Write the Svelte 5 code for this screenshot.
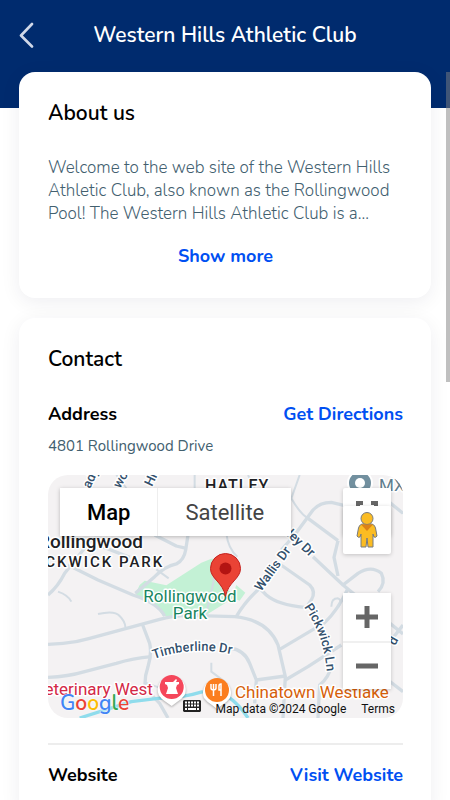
<script lang="ts">
    let expanded = $state(false);
    let mapType = $state('Map');

    const mapTypes = ['Map', 'Satellite'];

    const roads = [
        'M0 523 L45 520 Q85 517 125 505 L335 448 Q370 438 420 436 L560 440 Q660 450 690 525 L712 620 L705 744',
        'M0 622 Q60 620 110 605 L205 580 Q255 565 310 560',
        'M545 534 Q590 540 605 580 L625 630 L620 700',
        'M625 630 L712 618',
        'M284 465 L305 520 Q312 550 300 590 Q288 625 292 655 L335 700 L360 744',
        'M0 375 Q30 350 50 310 L125 215 L160 190',
        'M60 285 L150 330 L255 375 Q330 400 350 438',
        'M150 225 L245 262',
        'M320 195 L385 228 L415 235',
        'M420 195 L413 240 Q408 270 385 282 Q350 290 320 320 L262 370',
        'M565 440 Q590 395 640 350 M700 240 L740 195 L795 120 Q815 97 850 97 L925 115',
        'M780 145 L870 212',
        'M870 212 L858 262 L870 318',
        'M795 260 L885 345 L1065 492',
        'M885 345 L930 310 Q970 285 1000 310 Q1015 340 990 365',
        'M630 350 L655 375 Q690 405 770 412',
        'M695 282 L785 345 Q805 365 790 390 L780 405',
        'M695 538 L830 458 Q870 420 900 355',
        'M712 630 L780 590 L880 525',
        'M848 590 Q845 620 815 645 L810 744',
        'M1010 85 L1065 130',
        'M1020 630 L1065 665',
        'M1030 510 L1065 465',
    ];

    const lanes = [
        'M150 432 Q200 420 215 438 Q232 455 232 472',
        'M325 298 L362 325',
        'M535 190 Q540 235 568 260',
        'M500 320 L475 430',
        'M205 15 L235 54 M440 15 V54 M600 15 L620 54',
        'M755 15 L730 85 Q755 130 780 145',
        'M490 578 V605 L530 635',
        'M292 638 L340 655',
        'M30 365 Q60 375 70 395',
        'M850 410 Q850 385 870 385 Q885 392 870 412',
    ];
</script>

<div class="page">
    <header>
        <button class="back" aria-label="Back">
            <svg width="15" height="26" viewBox="0 0 15 26" aria-hidden="true">
                <path d="M13 2 2 13.500l11 11" />
            </svg>
        </button>
        <h1>Western Hills Athletic Club</h1>
    </header>

    <main>
        <section class="card">
            <h2>About us</h2>
            <p class="about" class:expanded>
                Welcome to the web site of the Western Hills Athletic Club, also known as the
                Rollingwood Pool! The Western Hills Athletic Club is a...
            </p>
            <button class="action more" onclick={() => (expanded = !expanded)}>Show more</button>
        </section>

        <section class="card">
            <h2>Contact</h2>
            <div class="row">
                <h3>Address</h3>
                <a class="action" href="#directions">Get Directions</a>
            </div>
            <p class="address">4801 Rollingwood Drive</p>

            <div class="map">
                <svg class="canvas" viewBox="0 0 355 243" preserveAspectRatio="xMidYMid slice">
                    <g transform="translate(0 -5) scale(.33333)">
                        <path
                            class="park"
                            d="M275 345 L290 332 L355 346 L460 278 L490 266 H540 L530 350 L555 372 L565 345 L592 368 L575 392 L555 385 L490 425 L470 438 H345 L325 408 L262 372Z"
                        />
                        {#each lanes as d}
                            <path class="lane" {d} />
                        {/each}
                        {#each roads as d}
                            <path class="road" {d} />
                        {/each}
                        <path
                            class="river"
                            d="M95 744 L250 695 L330 685 Q400 685 465 665 M540 680 Q575 705 600 744"
                        />
                    </g>

                    <g class="street">
                        <text transform="translate(42 14) rotate(-65)">ady</text>
                        <text transform="translate(72 14) rotate(-60)">wood</text>
                        <text transform="translate(104 12) rotate(-65)">Hills</text>
                        <text transform="translate(213 117) rotate(-54)">Wallis Dr</text>
                        <text transform="translate(238 60) rotate(43)">ley Dr</text>
                        <text transform="translate(347 171) rotate(-60)">d</text>
                        <path id="timberline" d="M106 184 Q145 170 188 180" />
                        <text><textPath href="#timberline">Timberline Dr</textPath></text>
                        <path id="pickwick" d="M256 132 Q276 160 279 198" />
                        <text><textPath href="#pickwick">Pickwick Ln</textPath></text>
                    </g>

                    <text class="area" x="157" y="16">HATLEY</text>
                    <text class="town" x="-10" y="73">Rollingwood</text>
                    <text class="area wide" x="-9" y="92">ICKWICK PARK</text>
                    <text class="green" x="142" y="127" text-anchor="middle">Rollingwood</text>
                    <text class="green" x="142" y="144" text-anchor="middle">Park</text>
                    <text class="vet" x="-14" y="220">Veterinary West</text>
                    <text class="food" x="187" y="223">Chinatown Westlake</text>
                    <text class="shop" x="331" y="16">MX</text>

                    <circle cx="312" cy="8" r="12" fill="#72909f" stroke="#fff" stroke-width="2" />
                    <circle cx="312" cy="8" r="5" fill="#fff" />

                    <path
                        class="pin"
                        d="M110.700 220A14 14 0 1 1 136.700 220Q134 224 129 227L123.700 231L118 227Q113 224 110.700 220Z"
                    />
                    <circle cx="123.700" cy="212" r="12" fill="#f5475b" />
                    <path
                        fill="#fff"
                        d="M117 207h8l3-3 1 1-1 2h3v2l-2 1-1 3 2 6h-12l2-6-1-3-2-1v-2Z"
                    />
                    <path
                        class="pin"
                        d="M156 223A14 14 0 1 1 182 223Q179 227 174 230L169 234L164 230Q159 227 156 223Z"
                    />
                    <circle cx="169" cy="215" r="12" fill="#fb7e1f" />
                    <path
                        fill="none"
                        stroke="#fff"
                        stroke-width="1.500"
                        d="M163 209v4q0 2 2.500 2t2.500-2v-4M165.500 209v12M173 209v12M171 215v-4q0-2 2-2v6Z"
                    />

                    <path
                        fill="#ea4335"
                        stroke="#c5221f"
                        d="M177.500 121.500C175 107 162.500 104 162.500 93.500a15 15 0 0 1 30 0C192.500 104 180 107 177.500 121.500Z"
                    />
                    <circle cx="177.500" cy="93.500" r="6" fill="#b31412" />
                </svg>

                <div class="types">
                    {#each mapTypes as type}
                        <button class:active={mapType === type} onclick={() => (mapType = type)}>
                            {type}
                        </button>
                    {/each}
                </div>

                <div class="corner">
                    <button class="fullscreen" aria-label="Toggle fullscreen view">
                        <svg width="22" height="22" viewBox="0 0 22 22" aria-hidden="true">
                            <path d="M2 7V2h5M15 2h5v5M20 15v5h-5M7 20H2v-5" />
                        </svg>
                    </button>
                    <button class="pegman" aria-label="Street View">
                        <svg width="22" height="38" viewBox="0 0 22 38" aria-hidden="true">
                            <g fill="#fbbc23" stroke="#777a7f">
                                <path
                                    d="M6 13Q3 14 2.500 17L1 25q1 2 3 1l1-3v13h5l1-9 1 9h5V23l1 3q2 1 3-1l-1.500-8Q19 14 16 13Z"
                                />
                                <circle cx="11" cy="7.500" r="6" />
                            </g>
                            <path fill="#dc8217" d="M5 13.500h12L11 20Z" />
                        </svg>
                    </button>
                </div>

                <div class="zoom">
                    <button aria-label="Zoom in">
                        <svg width="22" height="22" viewBox="0 0 22 22" aria-hidden="true">
                            <path d="M0 11h22M11 0v22" />
                        </svg>
                    </button>
                    <button aria-label="Zoom out">
                        <svg width="22" height="22" viewBox="0 0 22 22" aria-hidden="true">
                            <path d="M0 11h22" />
                        </svg>
                    </button>
                </div>

                <a class="google" href="#google" aria-label="Google"
                    ><span class="blue">G</span><span class="red">o</span><span class="yellow">o</span
                    ><span class="blue">g</span><span class="lime">l</span><span class="red">e</span></a
                >

                <div class="credits">
                    <button class="keys" aria-label="Keyboard shortcuts">
                        <svg width="18" height="12" viewBox="0 0 18 12" aria-hidden="true">
                            <path fill="#222" d="M1 0h16l1 1v10l-1 1H1l-1-1V1Z" />
                            <path
                                stroke="#fff"
                                stroke-width="2"
                                stroke-dasharray="2 1"
                                d="M2 2.500h14M2 5.500h14"
                            />
                            <path stroke="#fff" stroke-width="2" d="M2 9h2M5 9h8M14 9h2" />
                        </svg>
                    </button>
                    <span>Map data ©2024 Google</span>
                    <a href="#terms">Terms</a>
                </div>
            </div>

            <div class="row website">
                <h3>Website</h3>
                <a class="action" href="#website">Visit Website</a>
            </div>
        </section>
    </main>
    <div class="scrollbar"></div>
</div>

<style>
    :global(body) {
        background: #fff;
        font-family: Nunito, Lato, 'Open Sans', sans-serif;
    }

    button {
        background: transparent;
        border: 0;
        cursor: pointer;
        font-family: inherit;
        padding: 0;
    }

    a {
        text-decoration: none;
    }

    h1,
    h2,
    h3,
    p {
        margin: 0;
    }

    .page {
        height: 100vh;
        overflow: hidden;
        position: relative;
    }

    header {
        align-items: center;
        background: #002b6e;
        box-sizing: border-box;
        display: grid;
        grid-template-columns: 32px 1fr 32px;
        height: 108px;
        padding: 0 19px 38px;
    }

    .back {
        display: flex;
    }

    .back path {
        fill: none;
        stroke: #d0d8e8;
        stroke-linecap: round;
        stroke-linejoin: round;
        stroke-width: 2.6;
    }

    h1 {
        color: #fff;
        font-size: 21px;
        font-weight: 650;
        line-height: 28px;
        text-align: center;
    }

    main {
        display: flex;
        flex-direction: column;
        gap: 20px;
        margin-top: -36px;
        padding: 0 19px 20px;
    }

    .card {
        background: #fff;
        border-radius: 16px;
        box-shadow: 0 4px 20px rgba(20, 20, 60, 0.07);
        display: flex;
        flex-direction: column;
        padding: 27px 28px 30px 29px;
    }

    h2 {
        color: #000;
        font-size: 21px;
        font-weight: 650;
        line-height: 28px;
        margin-bottom: 29px;
    }

    h3 {
        color: #000;
        font-size: 18px;
        font-weight: 700;
        line-height: 24px;
    }

    .about {
        color: #42606f;
        display: -webkit-box;
        font-size: 17px;
        font-weight: 300;
        line-height: 23px;
        overflow: hidden;
        -webkit-box-orient: vertical;
        -webkit-line-clamp: 3;
        line-clamp: 3;
    }

    .about.expanded {
        -webkit-line-clamp: none;
        line-clamp: none;
    }

    .action {
        color: #004ff2;
        font-size: 18px;
        font-weight: 700;
        line-height: 24px;
    }

    .more {
        align-self: center;
        margin-top: 19px;
    }

    .row {
        align-items: center;
        display: flex;
        justify-content: space-between;
    }

    .address {
        color: #42606f;
        font-size: 15px;
        line-height: 20px;
        margin: 10px 0 19px;
    }

    .map {
        background: #f4f2f3;
        border-radius: 20px;
        font-family: Roboto, Arial, sans-serif;
        height: 243px;
        overflow: hidden;
        position: relative;
    }

    .canvas {
        display: block;
        height: 100%;
        width: 100%;
    }

    .park {
        fill: #c3f1d5;
    }

    .road,
    .lane,
    .river {
        fill: none;
        stroke: #d3dce3;
        stroke-linejoin: round;
        stroke-width: 10;
    }

    .lane {
        stroke-width: 6;
    }

    .river {
        stroke: #8fdcec;
    }

    .canvas text {
        paint-order: stroke;
        stroke: #fff;
        stroke-linejoin: round;
        stroke-width: 3px;
    }

    .street {
        fill: #33506c;
        font-size: 13px;
        font-weight: 500;
    }

    .street path {
        fill: none;
    }

    .area {
        fill: #202124;
        font-size: 16px;
        font-weight: 500;
        letter-spacing: 1px;
    }

    .area.wide {
        font-size: 15px;
        letter-spacing: 2px;
    }

    .town {
        fill: #202124;
        font-size: 19px;
        font-weight: 500;
    }

    .green,
    .vet,
    .food,
    .shop {
        font-size: 17px;
    }

    .green {
        fill: #188560;
    }

    .vet {
        fill: #d32846;
    }

    .food {
        fill: #d65f0b;
    }

    .shop {
        fill: #5e7d8e;
    }

    .pin {
        fill: #fff;
        filter: drop-shadow(0 1px 1px rgba(0, 0, 0, 0.3));
    }

    .types {
        box-shadow: 0 1px 4px rgba(0, 0, 0, 0.25);
        display: flex;
        left: 12px;
        position: absolute;
        top: 13px;
    }

    .types button {
        background: #fff;
        color: #444;
        font-size: 22px;
        height: 48px;
        padding: 0 27px;
    }

    .types button + button {
        border-left: 1px solid #eee;
    }

    .types .active {
        color: #000;
        font-weight: 500;
    }

    .corner {
        position: absolute;
        right: 12px;
        top: 13px;
        width: 48px;
    }

    .corner button,
    .zoom button {
        align-items: center;
        background: #fff;
        display: flex;
        height: 48px;
        justify-content: center;
        width: 48px;
    }

    .corner button {
        border-radius: 2px;
        box-shadow: 0 1px 4px rgba(0, 0, 0, 0.2);
    }

    .corner .pegman {
        margin-top: -30px;
        position: relative;
    }

    .fullscreen path,
    .zoom path {
        fill: none;
        stroke: #666;
        stroke-width: 4;
    }

    .zoom {
        background: #fff;
        border-radius: 2px;
        bottom: 29px;
        box-shadow: 0 1px 4px rgba(0, 0, 0, 0.2);
        position: absolute;
        right: 12px;
    }

    .zoom path {
        stroke-width: 5;
    }

    .zoom button + button {
        border-top: 2px solid #f0f0f0;
    }

    .google {
        bottom: 3px;
        font-family: Nunito, Lato, sans-serif;
        font-size: 21px;
        font-weight: 600;
        left: 12px;
        line-height: 24px;
        position: absolute;
        text-shadow:
            0 0 1px #fff,
            0 0 2px #fff;
    }

    .blue {
        color: #4285f4;
    }

    .red {
        color: #ea4335;
    }

    .yellow {
        color: #fbbc05;
    }

    .lime {
        color: #34a853;
    }

    .credits {
        align-items: center;
        bottom: 0;
        color: #111;
        display: flex;
        font-size: 12px;
        line-height: 14px;
        position: absolute;
        right: 8px;
    }

    .keys {
        display: flex;
        margin: 0 15px 6px 0;
    }

    .credits a {
        color: inherit;
        margin-left: 15px;
    }

    .website {
        border-top: 2px solid #ededed;
        margin-top: 25px;
        padding-top: 18px;
    }

    .scrollbar {
        background: rgba(128, 128, 128, 0.5);
        height: 310px;
        position: absolute;
        right: 0;
        top: 72px;
        width: 4px;
    }
</style>
